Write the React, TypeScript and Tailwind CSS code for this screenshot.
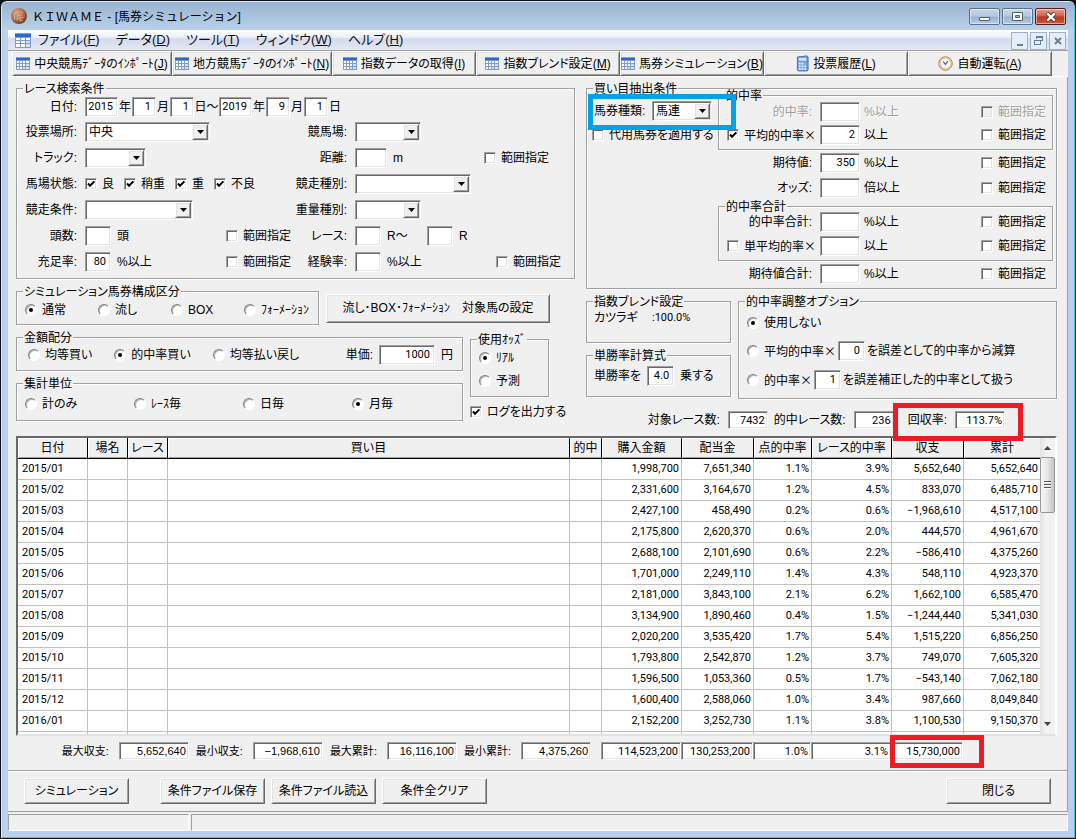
import React, { useId } from "react";
import clsx from "clsx";

const SUNKEN =
  "border border-[#a0a0a0] border-r-white border-b-white bg-white shadow-[inset_1px_1px_0_#696969,inset_-1px_-1px_0_#e3e3e3]";
const RAISED =
  "border border-white border-r-[#696969] border-b-[#696969] bg-[#f0f0f0] shadow-[inset_1px_1px_0_#e3e3e3,inset_-1px_-1px_0_#a0a0a0]";
const NUM = "font-['Roboto','Liberation_Sans',sans-serif] text-[11px]";
const WIDE_SIGNS = "font-['Noto_Sans_CJK_JP',sans-serif]";

/* ---------- icons ---------- */

function GridIcon({ className }: { className?: string }) {
  return (
    <svg viewBox="0 0 16 16" className={clsx("size-4 shrink-0", className)} aria-hidden="true" shapeRendering="crispEdges">
      <rect x="0" y="1" width="16" height="15" fill="#7d9bcb" />
      <rect x="0" y="1" width="16" height="4" fill="#2f66d0" />
      <rect x="0" y="1" width="16" height="1" fill="#6ea0f0" />
      {[6, 9, 12].map((y) =>
        [1, 6, 11].map((x) => (
          <rect key={`${x}-${y}`} x={x} y={y} width="4" height={y === 12 ? 3 : 2} fill={x + y > 19 ? "#d0e0f8" : "#ffffff"} />
        ))
      )}
    </svg>
  );
}

function SmallGridIcon() {
  return (
    <svg viewBox="0 0 14 14" className="size-[14px] shrink-0" aria-hidden="true" shapeRendering="crispEdges">
      <rect x="0" y="0" width="14" height="13" fill="#7d9bcb" />
      <rect x="0" y="0" width="14" height="3" fill="#2f66d0" />
      <rect x="0" y="0" width="14" height="1" fill="#6ea0f0" />
      {[4, 7, 10].map((y) =>
        [1, 4, 7, 10].map((x) => (
          <rect key={`${x}-${y}`} x={x} y={y} width={x === 10 ? 3 : 2} height="2" fill={x + y > 14 ? "#d0e0f8" : "#ffffff"} />
        ))
      )}
    </svg>
  );
}

function HorseIcon() {
  return (
    <svg viewBox="0 0 18 18" className="size-[18px] shrink-0" aria-hidden="true">
      <defs>
        <radialGradient id="copper" cx="35%" cy="30%" r="75%">
          <stop offset="0" stopColor="#e0a27c" />
          <stop offset="0.6" stopColor="#b06a45" />
          <stop offset="1" stopColor="#6d3820" />
        </radialGradient>
      </defs>
      <circle cx="9" cy="9" r="8" fill="url(#copper)" />
      <path
        d="M4.500 12.500V7l2-3M7 13l.5-6 2.500-2.500L13 6M8.500 8.500 12 8M10 11l3.500-.5M7 13l2.500-3 1 4 2-1"
        fill="none"
        stroke="#c9b4ab"
        strokeWidth="0.900"
      />
    </svg>
  );
}

function CalculatorIcon() {
  return (
    <svg viewBox="0 0 14 18" className="h-[17px] w-[13px] shrink-0" aria-hidden="true">
      <path d="M1.500 2 12 .8l1 1.200v13.500L12 17H2.500L1.500 16z" fill="#6d9fe6" stroke="#3c6cb8" />
      <rect x="3" y="3" width="8" height="3" fill="#cfe4ff" />
      {[8, 11, 14].map((y) =>
        [3, 6, 9].map((x) => (
          <rect key={`${x}-${y}`} x={x} y={y} width="2" height="2" fill={x === 9 && y === 8 ? "#f0a040" : "#e6f0ff"} />
        ))
      )}
    </svg>
  );
}

function ClockIcon() {
  return (
    <svg viewBox="0 0 16 16" className="size-[15px] shrink-0" aria-hidden="true">
      <circle cx="8" cy="8" r="7.200" fill="#eef5fc" stroke="#a87a35" strokeWidth="1" />
      <circle cx="8" cy="8" r="6" fill="none" stroke="#e2bd78" strokeWidth="1.400" />
      <path d="M5.500 6 8 9l2.500-3.500" fill="none" stroke="#3c5a80" strokeWidth="1.100" />
    </svg>
  );
}

/* ---------- controls ---------- */

function TextBox({ label, value = "", className, disabled }: { label: string; value?: string; className: string; disabled?: boolean }) {
  return (
    <input
      type="text"
      aria-label={label}
      defaultValue={value}
      disabled={disabled}
      className={clsx("h-5 shrink-0 pr-1 pb-px pl-[2px] text-right outline-none", SUNKEN, NUM, className)}
    />
  );
}

function Combo({ id, label, value = "", className }: { id?: string; label?: string; value?: string; className: string }) {
  return (
    <span className={clsx("relative inline-block h-5 shrink-0", className)}>
      <select
        id={id}
        aria-label={label}
        defaultValue={value}
        className={clsx("block h-full w-full appearance-none pr-5 pl-[3px] text-xs outline-none", SUNKEN)}
      >
        <option value={value}>{value}</option>
      </select>
      <span
        className={clsx(
          "pointer-events-none absolute top-[2px] right-[2px] bottom-[2px] flex w-4 items-center justify-center",
          RAISED
        )}
      >
        <svg viewBox="0 0 7 4" className="h-1 w-[7px]" aria-hidden="true">
          <path d="M0 0h7L3.5 4z" fill="#000" />
        </svg>
      </span>
    </span>
  );
}

function Check({ text, checked, disabled, className }: { text: string; checked?: boolean; disabled?: boolean; className?: string }) {
  return (
    <label
      className={clsx(
        "inline-flex shrink-0 items-center gap-[5px] whitespace-nowrap",
        disabled && "text-[#a0a0a0] [text-shadow:1px_1px_0_#fff]",
        className
      )}
    >
      <span className="grid size-3 shrink-0">
        <input
          type="checkbox"
          defaultChecked={checked}
          disabled={disabled}
          className={clsx("peer col-start-1 row-start-1 size-3 appearance-none disabled:bg-[#f0f0f0]", SUNKEN)}
        />
        <svg
          viewBox="0 0 12 12"
          className="pointer-events-none col-start-1 row-start-1 hidden size-3 peer-checked:block"
          aria-hidden="true"
        >
          <path d="M3 5.5 5 7.8 9.4 3.4" fill="none" stroke="#000" strokeWidth="2" />
        </svg>
      </span>
      {text}
    </label>
  );
}

function Radio({ text, name, checked, className }: { text: string; name: string; checked?: boolean; className?: string }) {
  return (
    <label className={clsx("inline-flex shrink-0 items-center gap-[5px] whitespace-nowrap", className)}>
      <span className="grid size-3 shrink-0 place-items-center">
        <input
          type="radio"
          name={name}
          defaultChecked={checked}
          className="peer col-start-1 row-start-1 size-3 appearance-none rounded-full border border-[#808080] border-r-white border-b-white bg-white shadow-[inset_1px_1px_0_#b4b4b4]"
        />
        <span className="pointer-events-none col-start-1 row-start-1 hidden size-1 rounded-full bg-black peer-checked:block" />
      </span>
      {text}
    </label>
  );
}

function Group({ title, className, children }: { title: string; className?: string; children: React.ReactNode }) {
  return (
    <fieldset
      className={clsx(
        "relative min-w-0 border border-[#a0a0a0] shadow-[inset_1px_1px_0_#fff,1px_1px_0_#fff]",
        className
      )}
    >
      <legend className="absolute -top-[7px] left-[6px] bg-[#f0f0f0] px-px leading-[14px] whitespace-nowrap">{title}</legend>
      {children}
    </fieldset>
  );
}

function PushButton({ children, className }: { children: React.ReactNode; className?: string }) {
  return (
    <button type="button" className={clsx("shrink-0 whitespace-nowrap", RAISED, className)}>
      {children}
    </button>
  );
}

function Highlight({ className }: { className: string }) {
  return <span aria-hidden="true" className={clsx("pointer-events-none absolute z-10", className)} />;
}

/* ---------- search conditions ---------- */

function FieldLabel({ children, htmlFor }: { children: React.ReactNode; htmlFor?: string }) {
  return (
    <label htmlFor={htmlFor} className="mr-2 w-[53px] shrink-0 text-right whitespace-nowrap">
      {children}
    </label>
  );
}

function SelectField({ label, value, className }: { label: string; value?: string; className: string }) {
  const id = useId();
  return (
    <div className="flex items-center">
      <FieldLabel htmlFor={id}>{label}:</FieldLabel>
      <Combo id={id} value={value} className={className} />
    </div>
  );
}

function SearchConditions() {
  return (
    <Group title="レース検索条件" className="pt-[6px] pb-[3px] pl-[7px]">
      <div className="flex h-6 items-center">
        <FieldLabel>日付:</FieldLabel>
        <div className="flex items-center">
          <TextBox label="開始年" value="2015" className="w-[33px]" />
          <span className="w-[14px] text-center">年</span>
          <TextBox label="開始月" value="1" className="w-6" />
          <span className="w-[14px] text-center">月</span>
          <TextBox label="開始日" value="1" className="w-6" />
          <span className="w-[25px] text-center">日～</span>
          <TextBox label="終了年" value="2019" className="w-[33px]" />
          <span className="w-[14px] text-center">年</span>
          <TextBox label="終了月" value="9" className="w-6" />
          <span className="w-[14px] text-center">月</span>
          <TextBox label="終了日" value="1" className="w-6" />
          <span className="w-[14px] text-center">日</span>
        </div>
      </div>
      <div className="grid auto-rows-[26px] grid-cols-[270px_1fr] items-center">
        <SelectField label="投票場所" value="中央" className="w-[125px]" />
        <SelectField label="競馬場" className="w-[66px]" />

        <SelectField label="トラック" className="w-[61px]" />
        <div className="flex items-center">
          <FieldLabel>距離:</FieldLabel>
          <TextBox label="距離" className="w-8" />
          <span className="ml-[6px]">m</span>
          <Check text="範囲指定" className="mr-[25px] ml-auto" />
        </div>

        <div className="flex items-center">
          <FieldLabel>馬場状態:</FieldLabel>
          <div className="flex gap-[10px]">
            <Check text="良" checked />
            <Check text="稍重" checked />
            <Check text="重" checked />
            <Check text="不良" checked />
          </div>
        </div>
        <SelectField label="競走種別" className="w-[116px]" />

        <SelectField label="競走条件" className="w-[108px]" />
        <SelectField label="重量種別" className="w-[66px]" />

        <div className="flex items-center">
          <FieldLabel>頭数:</FieldLabel>
          <TextBox label="頭数" className="w-[26px]" />
          <span className="ml-[6px]">頭</span>
          <Check text="範囲指定" className="mr-[3px] ml-auto" />
        </div>
        <div className="flex items-center">
          <FieldLabel>レース:</FieldLabel>
          <TextBox label="開始レース" className="w-[26px]" />
          <span className="ml-[6px] w-10">R～</span>
          <TextBox label="終了レース" className="w-[26px]" />
          <span className="ml-[6px]">R</span>
        </div>

        <div className="flex items-center">
          <FieldLabel>充足率:</FieldLabel>
          <TextBox label="充足率" value="80" className="w-[26px]" />
          <span className="ml-[6px]">%以上</span>
          <Check text="範囲指定" className="mr-[3px] ml-auto" />
        </div>
        <div className="flex items-center">
          <FieldLabel>経験率:</FieldLabel>
          <TextBox label="経験率" className="w-[26px]" />
          <span className="ml-[6px]">%以上</span>
          <Check text="範囲指定" className="mr-[13px] ml-auto" />
        </div>
      </div>
    </Group>
  );
}

/* ---------- bet extraction conditions ---------- */

type RateRowProps = { label: string; unit: string; value?: string; check?: "on" | "off"; disabled?: boolean; className: string };

function RateRow({ label, unit, value, check, disabled, className }: RateRowProps) {
  return (
    <div className={clsx("flex items-center", disabled && "text-[#a0a0a0] [text-shadow:1px_1px_0_#fff]", className)}>
      <div className="flex w-[97px] shrink-0 justify-end">
        {check ? (
          <Check text={label} checked={check === "on"} className={WIDE_SIGNS} />
        ) : (
          <span className="pr-1">{label}:</span>
        )}
      </div>
      <TextBox label={label} value={value} disabled={disabled} className="ml-1 w-10" />
      <span className="ml-1">{unit}</span>
      <Check text="範囲指定" disabled={disabled} className="mr-[6px] ml-auto" />
    </div>
  );
}

function BetConditions() {
  const id = useId();
  return (
    <Group title="買い目抽出条件" className="flex pt-[6px] pr-[3px] pb-px pl-[5px]">
      <div className="w-[126px] shrink-0">
        <div className="relative flex h-8 items-center">
          <label htmlFor={id} className="ml-[2px] w-[58px] whitespace-nowrap">
            馬券種類:
          </label>
          <Combo id={id} value="馬連" className="w-[60px]" />
          <Highlight className="-top-px -left-1 h-[36px] w-[148px] border-[5px] border-[#00a2e8]" />
        </div>
        <Check text="代用馬券を適用する" />
      </div>
      <div className="min-w-0 flex-1">
        <Group title="的中率" className="pt-1 pb-[3px]">
          <RateRow label="的中率" unit="%以上" disabled className="h-[23px]" />
          <RateRow label="平均的中率×" unit="以上" value="2" check="on" className="h-[23px]" />
        </Group>
        <div className="px-px">
          <RateRow label="期待値" unit="%以上" value="350" className="h-[25px]" />
          <RateRow label="オッズ" unit="倍以上" className="h-[25px]" />
        </div>
        <Group title="的中率合計" className="mt-[6px] pt-[3px] pb-[2px]">
          <RateRow label="的中率合計" unit="%以上" className="h-6" />
          <RateRow label="単平均的率×" unit="以上" check="off" className="h-6" />
        </Group>
        <div className="px-px">
          <RateRow label="期待値合計" unit="%以上" className="h-[26px]" />
        </div>
      </div>
    </Group>
  );
}

/* ---------- result grid ---------- */

const COLUMNS: [string, string][] = [
  ["日付", "w-[70px]"],
  ["場名", "w-10"],
  ["レース", "w-10"],
  ["買い目", ""],
  ["的中", "w-8"],
  ["購入金額", "w-20"],
  ["配当金", "w-[72px]"],
  ["点的中率", "w-[58px]"],
  ["レース的中率", "w-20"],
  ["収支", "w-[72px]"],
  ["累計", "w-[76px]"],
];

const ROWS: string[][] = [
  ["2015/01", "1,998,700", "7,651,340", "1.1%", "3.9%", "5,652,640", "5,652,640"],
  ["2015/02", "2,331,600", "3,164,670", "1.2%", "4.5%", "833,070", "6,485,710"],
  ["2015/03", "2,427,100", "458,490", "0.2%", "0.6%", "−1,968,610", "4,517,100"],
  ["2015/04", "2,175,800", "2,620,370", "0.6%", "2.0%", "444,570", "4,961,670"],
  ["2015/05", "2,688,100", "2,101,690", "0.6%", "2.2%", "−586,410", "4,375,260"],
  ["2015/06", "1,701,000", "2,249,110", "1.4%", "4.3%", "548,110", "4,923,370"],
  ["2015/07", "2,181,000", "3,843,100", "2.1%", "6.2%", "1,662,100", "6,585,470"],
  ["2015/08", "3,134,900", "1,890,460", "0.4%", "1.5%", "−1,244,440", "5,341,030"],
  ["2015/09", "2,020,200", "3,535,420", "1.7%", "5.4%", "1,515,220", "6,856,250"],
  ["2015/10", "1,793,800", "2,542,870", "1.2%", "3.7%", "749,070", "7,605,320"],
  ["2015/11", "1,596,500", "1,053,360", "0.5%", "1.7%", "−543,140", "7,062,180"],
  ["2015/12", "1,600,400", "2,588,060", "1.0%", "3.4%", "987,660", "8,049,840"],
  ["2016/01", "2,152,200", "3,252,730", "1.1%", "3.8%", "1,100,530", "9,150,370"],
];

function ResultGrid() {
  return (
    <div className="flex border-2 border-[#696969] border-r-white border-b-[#e3e3e3] bg-white">
      <table className="min-w-0 flex-1 table-fixed border-separate border-spacing-0">
        <thead>
          <tr className="h-[21px]">
            {COLUMNS.map(([name, width], i) => (
              <th
                key={name}
                scope="col"
                className={clsx(
                  "border-b border-black bg-[#f0f0f0] p-0 text-center font-normal whitespace-nowrap shadow-[inset_1px_1px_0_#fff,inset_0_-1px_0_#a0a0a0]",
                  i < COLUMNS.length - 1 && "border-r",
                  width
                )}
              >
                {name}
              </th>
            ))}
          </tr>
        </thead>
        <tbody>
          {ROWS.map(([month, ...values]) => (
            <tr key={month} className={clsx("h-[21px]", NUM)}>
              <td className="border-r border-b border-[#c0c0c0] py-0 pr-0 pl-1">{month}</td>
              {[0, 1, 2, 3].map((i) => (
                <td key={i} className="border-r border-b border-[#c0c0c0] p-0" />
              ))}
              {values.map((value, i) => (
                <td
                  key={i}
                  className={clsx(
                    "border-b border-[#c0c0c0] py-0 pr-[2px] pl-0 text-right whitespace-nowrap",
                    i < values.length - 1 && "border-r"
                  )}
                >
                  {value}
                </td>
              ))}
            </tr>
          ))}
          <tr className="h-[2px]">
            {COLUMNS.map(([name], i) => (
              <td key={name} className={clsx("border-[#c0c0c0] p-0", i < COLUMNS.length - 1 && "border-r")} />
            ))}
          </tr>
        </tbody>
      </table>
      <div
        className="flex w-[15px] shrink-0 flex-col items-center bg-[linear-gradient(90deg,#e3e3e3,#f2f2f2_40%,#f2f2f2)]"
        aria-hidden="true"
      >
        <svg viewBox="0 0 7 4" className="mt-2 h-1 w-[7px]">
          <path d="M0 4h7L3.5 0z" fill="#444" />
        </svg>
        <div className="mt-[7px] flex h-14 w-[15px] flex-col items-center justify-center gap-px rounded-[2px] border border-[#979797] bg-[linear-gradient(90deg,#f5f5f5,#e9e9eb_45%,#c4c4c8)]">
          <span className="h-[2px] w-[7px] border-t border-[#555] bg-white" />
          <span className="h-[2px] w-[7px] border-t border-[#555] bg-white" />
          <span className="h-[2px] w-[7px] border-t border-[#555] bg-white" />
        </div>
        <svg viewBox="0 0 7 4" className="mt-auto mb-2 h-1 w-[7px]">
          <path d="M0 0h7L3.5 4z" fill="#444" />
        </svg>
      </div>
    </div>
  );
}

function Extreme({ label, value }: { label: string; value: string }) {
  const id = useId();
  return (
    <div className="flex items-center gap-[10px] text-[11px]">
      <label htmlFor={id} className="whitespace-nowrap">
        {label}:
      </label>
      <input
        id={id}
        readOnly
        defaultValue={value}
        className={clsx("h-[18px] w-[70px] px-[2px] text-right text-[11px] outline-none", SUNKEN)}
      />
    </div>
  );
}

function Total({ label, value, className }: { label: string; value: string; className: string }) {
  return (
    <input
      aria-label={label}
      readOnly
      defaultValue={value}
      className={clsx("h-[18px] px-[2px] text-right outline-none", SUNKEN, NUM, className)}
    />
  );
}

function Summary() {
  return (
    <div className="mt-[6px] flex items-center justify-end pr-[94px]">
      <div className="mr-[10px] flex gap-[7px]">
        <Extreme label="最大収支" value="5,652,640" />
        <Extreme label="最小収支" value="−1,968,610" />
        <Extreme label="最大累計" value="16,116,100" />
        <Extreme label="最小累計" value="4,375,260" />
      </div>
      <Total label="購入金額合計" value="114,523,200" className="w-20" />
      <Total label="配当金合計" value="130,253,200" className="w-[72px]" />
      <Total label="点的中率合計" value="1.0%" className="w-[58px]" />
      <Total label="レース的中率合計" value="3.1%" className="w-20" />
      <span className="relative flex">
        <Total label="収支合計" value="15,730,000" className="w-[72px]" />
        <Highlight className="-top-[7px] -left-px h-[33px] w-[94px] border-[5px] border-[#ed1c24]" />
      </span>
    </div>
  );
}

/* ---------- window chrome ---------- */

const MENUS: [string, string][] = [
  ["ファイル", "F"],
  ["データ", "D"],
  ["ツール", "T"],
  ["ウィンドウ", "W"],
  ["ヘルプ", "H"],
];

const TOOLS: { text: string; mnemonic: string; icon: React.ReactNode; width: string }[] = [
  { text: "中央競馬ﾃﾞｰﾀのｲﾝﾎﾟｰﾄ", mnemonic: "J", icon: <SmallGridIcon />, width: "w-40" },
  { text: "地方競馬ﾃﾞｰﾀのｲﾝﾎﾟｰﾄ", mnemonic: "N", icon: <SmallGridIcon />, width: "w-40" },
  { text: "指数データの取得", mnemonic: "I", icon: <SmallGridIcon />, width: "w-36" },
  { text: "指数ブレンド設定", mnemonic: "M", icon: <SmallGridIcon />, width: "w-36" },
  { text: "馬券シミュレーション", mnemonic: "B", icon: <SmallGridIcon />, width: "w-36" },
  { text: "投票履歴", mnemonic: "L", icon: <CalculatorIcon />, width: "w-36" },
  { text: "自動運転", mnemonic: "A", icon: <ClockIcon />, width: "w-36" },
];

function CaptionButton({ label, danger, children }: { label: string; danger?: boolean; children: React.ReactNode }) {
  return (
    <button
      type="button"
      aria-label={label}
      className={clsx(
        "flex h-[17px] w-[31px] items-center justify-center rounded-[2px] border shadow-[inset_0_0_0_1px_rgba(255,255,255,0.5)]",
        danger
          ? "border-[#5a1a1a] bg-[linear-gradient(#e0a090,#d0604c_48%,#b83420_52%,#cc5a40)]"
          : "border-[#5a6f88] bg-[linear-gradient(#c6d6e8,#b4c9e0_48%,#96b0cc_52%,#b4cce4)]"
      )}
    >
      {children}
    </button>
  );
}

function MdiButton({ label, children }: { label: string; children: React.ReactNode }) {
  return (
    <button
      type="button"
      aria-label={label}
      className="flex h-[18px] w-[17px] items-center justify-center border border-[#9fb3c8] bg-[#e4eefa]"
    >
      {children}
    </button>
  );
}

export default function App() {
  const raceId = useId();
  const hitId = useId();
  const rateId = useId();
  return (
    <div className="flex min-h-screen flex-col bg-[#101418] p-px font-['Liberation_Sans','Noto_Sans_CJK_JP',sans-serif] text-xs leading-4 text-black [font-feature-settings:'palt']">
      <div className="flex flex-1 flex-col rounded-t-[6px] border border-[#dbe9f7] border-r-[#38c8e8] border-b-[#38c8e8] bg-[#b9d1ea] px-[6px] pb-[6px]">
        <header className="-mx-[6px] flex h-7 shrink-0 items-center rounded-t-[5px] bg-[linear-gradient(#98b3d1,#b9d1ea)] pr-2 pl-2">
          <HorseIcon />
          <h1 className="ml-1 pt-px text-xs whitespace-nowrap [font-feature-settings:normal]">ＫＩＷＡＭＥ - [馬券シミュレーション]</h1>
          <div className="ml-auto flex gap-[2px] pt-px">
            <CaptionButton label="最小化">
              <span className="mt-1 h-1 w-[11px] rounded-[1px] border border-[#50606f] bg-white" />
            </CaptionButton>
            <CaptionButton label="最大化">
              <svg viewBox="0 0 11 9" className="h-[9px] w-[11px]" aria-hidden="true">
                <path d="M.5.5h10v8H.5z" fill="#fff" stroke="#50606f" />
                <path d="M3.5 3.5h4v2h-4z" fill="#9ab3cf" stroke="#50606f" />
              </svg>
            </CaptionButton>
            <CaptionButton label="閉じる" danger>
              <svg viewBox="0 0 12 10" className="h-[10px] w-3" aria-hidden="true">
                <path d="m2 1 8 8M10 1 2 9" stroke="#4a3038" strokeWidth="4" />
                <path d="m2.3 1.4 7.4 7.2M9.7 1.4 2.3 8.6" stroke="#fff" strokeWidth="2.4" />
              </svg>
            </CaptionButton>
          </div>
        </header>

        <nav className="flex h-5 shrink-0 items-center bg-[linear-gradient(#ffffff,#eef1f9_35%,#d5dbee_45%,#e3e7f5)] pr-[2px] pl-[7px]">
          <GridIcon />
          <ul className="ml-[7px] flex gap-4 text-[13px]">
            {MENUS.map(([name, key]) => (
              <li key={key}>
                <a href="#menu" className="whitespace-nowrap text-[#101010]">
                  {name}(<span className="underline">{key}</span>)
                </a>
              </li>
            ))}
          </ul>
          <div className="ml-auto flex gap-[2px] pt-px">
            <MdiButton label="子ウィンドウを最小化">
              <span className="mt-2 h-[2px] w-[6px] bg-[#6b7f93]" />
            </MdiButton>
            <MdiButton label="子ウィンドウを元に戻す">
              <svg viewBox="0 0 9 9" className="size-[9px]" aria-hidden="true" shapeRendering="crispEdges">
                <path d="M2.5 3V.5h6v4H7" fill="none" stroke="#6b7f93" />
                <path d="M2 1h7" stroke="#6b7f93" strokeWidth="2" />
                <path d="M.5 4.5h6v4h-6z" fill="#e4eefa" stroke="#6b7f93" />
              </svg>
            </MdiButton>
            <MdiButton label="子ウィンドウを閉じる">
              <svg viewBox="0 0 8 8" className="size-2" aria-hidden="true">
                <path d="m1 1 6 6M7 1 1 7" stroke="#6b7f93" strokeWidth="2" />
              </svg>
            </MdiButton>
          </div>
        </nav>

        <div className="flex flex-1 flex-col bg-[#f0f0f0]">
          <div className="flex h-[27px] shrink-0 border-t border-b border-t-[#a0a0a0] border-b-white pl-1">
            {TOOLS.map((tool) => (
              <PushButton
                key={tool.mnemonic}
                className={clsx("flex h-[25px] items-center justify-center gap-1", tool.width)}
              >
                {tool.icon}
                <span>
                  {tool.text}(<span className="underline">{tool.mnemonic}</span>)
                </span>
              </PushButton>
            ))}
          </div>

          <main className="flex flex-1 flex-col border-r border-[#a0a0a0] pt-[11px] pr-[10px] pl-2">
            <div className="flex gap-[11px]">
              <div className="w-[559px] shrink-0">
                <SearchConditions />

                <div className="mt-3 flex items-center gap-[7px]">
                  <Group title="シミュレーション馬券構成区分" className="h-[34px] w-[303px] shrink-0">
                    <div className="grid h-full grid-cols-[73px_73px_73px_auto] items-center pt-[3px] pl-2">
                      <Radio name="bet" text="通常" checked />
                      <Radio name="bet" text="流し" />
                      <Radio name="bet" text="BOX" />
                      <Radio name="bet" text="ﾌｫｰﾒｰｼｮﾝ" />
                    </div>
                  </Group>
                  <PushButton className="h-[29px] w-56">流し･BOX･ﾌｫｰﾒｰｼｮﾝ　対象馬の設定</PushButton>
                </div>

                <div className="mt-3 flex gap-[7px]">
                  <div className="w-[447px] shrink-0">
                    <Group title="金額配分" className="h-[34px]">
                      <div className="flex h-full items-center pt-[2px] pr-[9px] pl-[11px]">
                        <div className="flex gap-[22px]">
                          <Radio name="amount" text="均等買い" />
                          <Radio name="amount" text="的中率買い" checked />
                          <Radio name="amount" text="均等払い戻し" />
                        </div>
                        <span className="ml-auto">単価:</span>
                        <TextBox label="単価" value="1000" className="mx-[6px] w-[56px]" />
                        <span>円</span>
                      </div>
                    </Group>
                    <Group title="集計単位" className="mt-3 h-[38px]">
                      <div className="grid h-full grid-cols-[109px_109px_109px_auto] items-center pt-[3px] pl-2">
                        <Radio name="unit" text="計のみ" />
                        <Radio name="unit" text="ﾚｰｽ毎" />
                        <Radio name="unit" text="日毎" />
                        <Radio name="unit" text="月毎" checked />
                      </div>
                    </Group>
                  </div>
                  <div className="mt-[2px]">
                    <Group title="使用ｵｯｽﾞ" className="h-[58px] w-[79px]">
                      <div className="flex flex-col gap-[7px] pt-[10px] pl-2">
                        <Radio name="odds" text="ﾘｱﾙ" checked />
                        <Radio name="odds" text="予測" />
                      </div>
                    </Group>
                    <Check text="ログを出力する" checked className="mt-[7px]" />
                  </div>
                </div>
              </div>

              <div className="min-w-0 flex-1">
                <BetConditions />

                <div className="mt-3 flex gap-[7px]">
                  <div className="w-[145px] shrink-0">
                    <Group title="指数ブレンド設定" className="h-[42px] pt-2 pl-[7px]">
                      <div className="flex">
                        <span className="w-[58px]">カツラギ</span>
                        <span className={NUM}>:100.0%</span>
                      </div>
                    </Group>
                    <Group title="単勝率計算式" className="mt-3 flex h-[42px] items-center gap-[6px] pl-[7px]">
                      <span>単勝率を</span>
                      <TextBox label="単勝率の乗数" value="4.0" className="w-[27px]" />
                      <span>乗する</span>
                    </Group>
                  </div>
                  <Group title="的中率調整オプション" className="flex h-[98px] flex-1 flex-col pt-[7px] pl-2">
                    <div className="flex h-[27px] items-center">
                      <Radio name="adjust" text="使用しない" checked />
                    </div>
                    <div className="flex h-[29px] items-center gap-[2px]">
                      <Radio name="adjust" text="平均的中率×" className={WIDE_SIGNS} />
                      <TextBox label="平均的中率の誤差" value="0" className="w-[27px]" />
                      <span className="whitespace-nowrap">を誤差として的中率から減算</span>
                    </div>
                    <div className="flex h-[29px] items-center gap-[2px]">
                      <Radio name="adjust" text="的中率×" className={WIDE_SIGNS} />
                      <TextBox label="的中率の補正値" value="1" className="w-[27px]" />
                      <span className="whitespace-nowrap">を誤差補正した的中率として扱う</span>
                    </div>
                  </Group>
                </div>

                <div className="mt-3 flex h-[18px] items-center justify-end pr-[52px] whitespace-nowrap">
                  <label htmlFor={raceId}>対象レース数:</label>
                  <input
                    id={raceId}
                    readOnly
                    defaultValue="7432"
                    className={clsx("mr-[6px] ml-2 h-[18px] w-10 px-[2px] text-right outline-none", SUNKEN, NUM)}
                  />
                  <label htmlFor={hitId}>的中レース数:</label>
                  <input
                    id={hitId}
                    readOnly
                    defaultValue="236"
                    className={clsx("ml-2 h-[18px] w-10 px-[2px] text-right outline-none", SUNKEN, NUM)}
                  />
                  <div className="relative flex items-center pl-[14px]">
                    <label htmlFor={rateId}>回収率:</label>
                    <input
                      id={rateId}
                      readOnly
                      defaultValue="113.7%"
                      className={clsx("ml-2 h-[18px] w-[50px] px-[2px] text-right outline-none", SUNKEN, NUM)}
                    />
                    <Highlight className="-top-2 -right-[18px] -left-px h-[38px] border-[5px] border-[#ed1c24]" />
                  </div>
                </div>
              </div>
            </div>

            <div className="mt-[7px]">
              <ResultGrid />
            </div>
            <Summary />
          </main>

          <div className="flex h-[41px] shrink-0 items-center border-t border-r border-[#a0a0a0] pr-4 pl-4 shadow-[inset_0_1px_0_#fff]">
            <PushButton className="h-[26px] w-[105px]">シミュレーション</PushButton>
            <div className="ml-[31px] flex gap-[6px]">
              <PushButton className="h-[26px] w-[105px]">条件ファイル保存</PushButton>
              <PushButton className="h-[26px] w-[105px]">条件ファイル読込</PushButton>
              <PushButton className="h-[26px] w-[105px]">条件全クリア</PushButton>
            </div>
            <PushButton className="ml-auto h-[26px] w-[105px]">閉じる</PushButton>
          </div>

          <footer className="flex h-5 shrink-0 gap-[2px] border-t border-[#a0a0a0] pt-[2px]">
            <div className="w-[181px] border border-[#a0a0a0] border-r-white border-b-white" />
            <div className="flex-1 border border-[#a0a0a0] border-r-white border-b-white" />
          </footer>
        </div>
      </div>
    </div>
  );
}
